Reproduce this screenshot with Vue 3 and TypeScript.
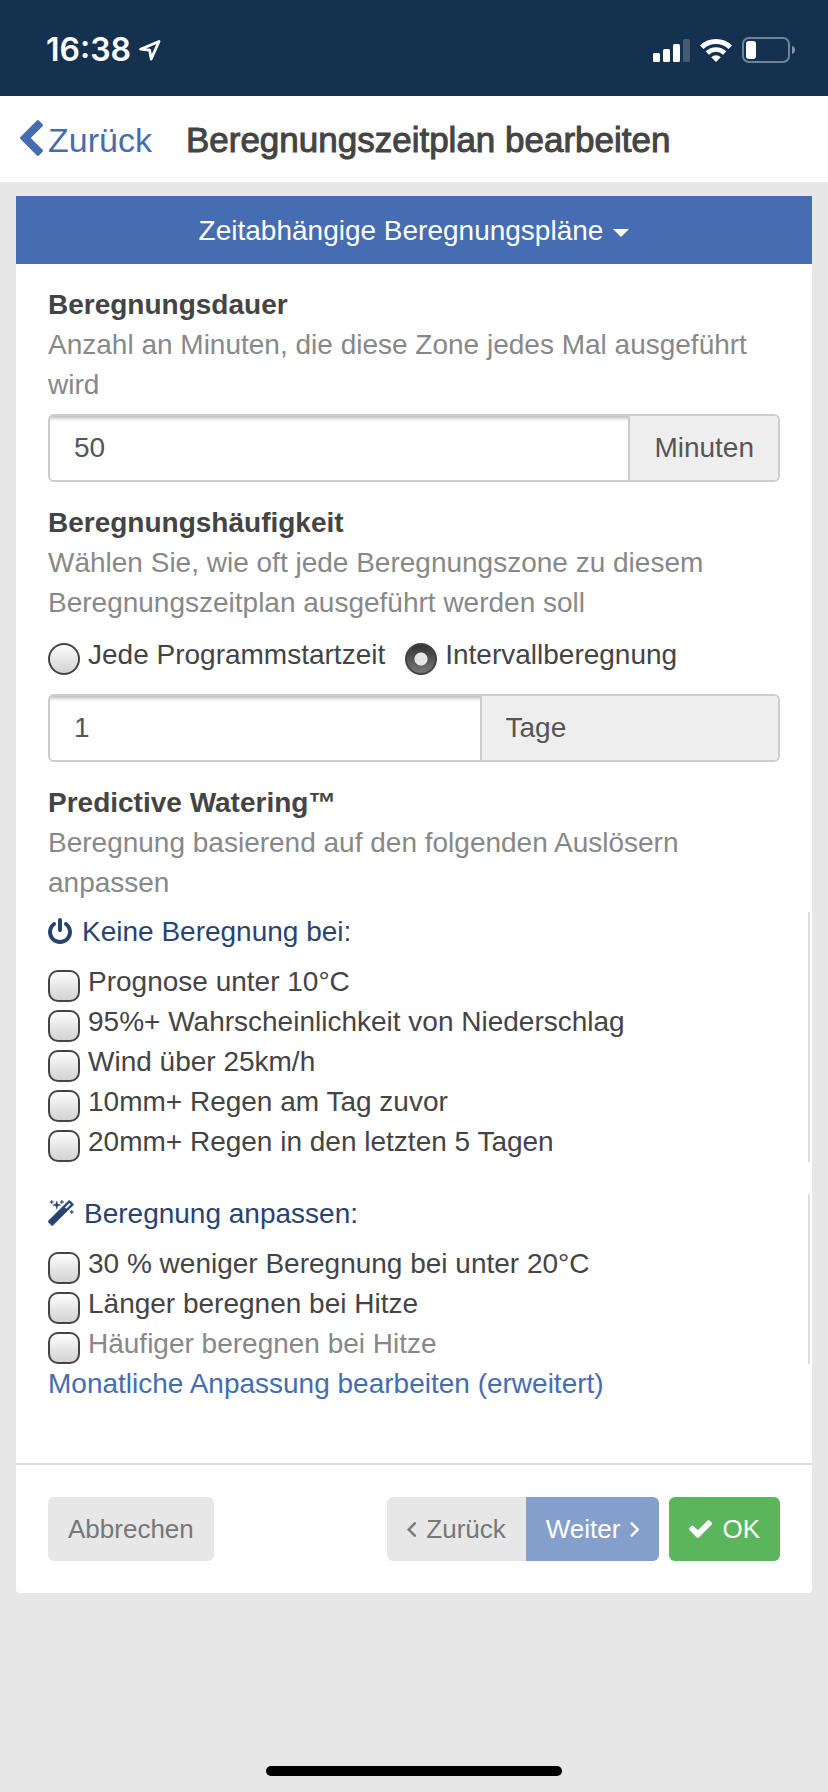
<script setup lang="ts">
import { ref } from 'vue'

interface Trigger {
  id: string
  label: string
  disabled?: boolean
}

const duration = ref('50')
const interval = ref('1')
const unit = ref('days')
const frequency = ref('interval')
const selected = ref<string[]>([])

const skipTriggers: Trigger[] = [
  { id: 'cold', label: 'Prognose unter 10°C' },
  { id: 'rain-chance', label: '95%+ Wahrscheinlichkeit von Niederschlag' },
  { id: 'wind', label: 'Wind über 25km/h' },
  { id: 'rain-day', label: '10mm+ Regen am Tag zuvor' },
  { id: 'rain-week', label: '20mm+ Regen in den letzten 5 Tagen' },
]

const adjustTriggers: Trigger[] = [
  { id: 'less', label: '30 % weniger Beregnung bei unter 20°C' },
  { id: 'longer', label: 'Länger beregnen bei Hitze' },
  { id: 'more-often', label: 'Häufiger beregnen bei Hitze', disabled: true },
]
</script>

<template>
  <div class="screen">
    <div class="status">
      <div class="status-group">
        <span class="clock">16:38</span>
        <svg class="location" viewBox="0 0 22 21" width="22" height="21" aria-hidden="true">
          <path d="M20 1.5 1.6 9.2l9 .9 1.6 8.9z" fill="none" stroke="#fff" stroke-width="2.8" stroke-linejoin="round" />
        </svg>
      </div>
      <div class="status-group status-right">
        <svg viewBox="0 0 37 23" width="37" height="23" aria-hidden="true">
          <g fill="#fff">
            <rect x="0" y="14" width="7" height="9" rx="1.5" />
            <rect x="10" y="10" width="7" height="13" rx="1.5" />
            <rect x="20" y="5" width="7" height="18" rx="1.5" />
            <rect x="30" y="0" width="7" height="23" rx="1.5" opacity=".2" />
          </g>
        </svg>
        <svg viewBox="0 0 32 24" width="32" height="24" aria-hidden="true">
          <g fill="none" stroke="#fff" stroke-width="5">
            <path d="M1.8 9.2a20.4 20.4 0 0 1 28.4 0" />
            <path d="M7.3 15a12.4 12.4 0 0 1 17.4 0" stroke-width="4.6" />
          </g>
          <path d="M16 24l-4.8-4.8a7 7 0 0 1 9.6 0z" fill="#fff" />
        </svg>
        <svg viewBox="0 0 54 26" width="54" height="26" aria-hidden="true">
          <rect x="1" y="1" width="46" height="24" rx="6" fill="none" stroke="#6d8499" stroke-width="2" />
          <rect x="4" y="4" width="10" height="18" rx="3" fill="#fff" />
          <path d="M50 9c4 1 4 7 0 8z" fill="#8496a7" />
        </svg>
      </div>
    </div>

    <header class="header">
      <a class="back" href="#">
        <svg viewBox="410 26 1036 1612" width="23" height="36" aria-hidden="true">
          <path fill="currentColor" d="M1427 301l-531 531 531 531q19 19 19 45t-19 45l-166 166q-19 19-45 19t-45-19l-742-742q-19-19-19-45t19-45l742-742q19-19 45-19t45 19l166 166q19 19 19 45t-19 45z" />
        </svg>
        <span>Zurück</span>
      </a>
      <h1 class="title">Beregnungszeitplan bearbeiten</h1>
    </header>

    <main class="panel">
      <button class="plan-menu" type="button" aria-haspopup="true">
        <span>Zeitabhängige Beregnungspläne</span>
        <span class="caret"></span>
      </button>

      <div class="body">
        <section class="section">
          <label class="label" for="duration">Beregnungsdauer</label>
          <p class="hint">Anzahl an Minuten, die diese Zone jedes Mal ausgeführt wird</p>
          <div class="input-group">
            <input id="duration" v-model="duration" class="field" type="text" inputmode="numeric" />
            <span class="addon">Minuten</span>
          </div>
        </section>

        <section class="section">
          <label class="label" for="interval">Beregnungshäufigkeit</label>
          <p class="hint">Wählen Sie, wie oft jede Beregnungszone zu diesem Beregnungszeitplan ausgeführt werden soll</p>
          <div class="radios">
            <label class="choice">
              <input v-model="frequency" class="box radio" type="radio" name="frequency" value="start" />
              <span>Jede Programmstartzeit</span>
            </label>
            <label class="choice">
              <input v-model="frequency" class="box radio" type="radio" name="frequency" value="interval" />
              <span>Intervallberegnung</span>
            </label>
          </div>
          <div class="input-group split">
            <input id="interval" v-model="interval" class="field" type="text" inputmode="numeric" />
            <select v-model="unit" class="addon unit" aria-label="Einheit">
              <option value="days">Tage</option>
            </select>
          </div>
        </section>

        <section>
          <h2 class="label">Predictive Watering™</h2>
          <p class="hint">Beregnung basierend auf den folgenden Auslösern anpassen</p>
          <div class="triggers" role="group" aria-labelledby="skip-title">
            <h3 id="skip-title" class="triggers-title">
              <svg viewBox="128 0 1536 1664" width="24" height="26" aria-hidden="true">
                <path fill="currentColor" d="M1664 896q0 156-61 298t-164 245-245 164-298 61-298-61-245-164-164-245-61-298q0-182 80.500-343t226.500-270q43-32 95.500-25t83.500 50q32 42 24.500 94.500t-49.500 84.500q-98 74-151.500 181t-53.500 228q0 104 40.500 198.500t109.500 163.500 163.500 109.500 198.500 40.500 198.500-40.500 163.500-109.500 109.500-163.500 40.500-198.500q0-121-53.500-228t-151.500-181q-42-32-49.500-84.500t24.500-94.500q31-43 84-50t95 25q146 109 226.500 270t80.500 343zm-640-768v640q0 52-38 90t-90 38-90-38-38-90v-640q0-52 38-90t90-38 90 38 38 90z" />
              </svg>
              <span>Keine Beregnung bei:</span>
            </h3>
            <label v-for="t in skipTriggers" :key="t.id" class="choice">
              <input v-model="selected" class="box" type="checkbox" :value="t.id" />
              <span>{{ t.label }}</span>
            </label>
          </div>
          <div class="triggers" role="group" aria-labelledby="adjust-title">
            <h3 id="adjust-title" class="triggers-title">
              <svg viewBox="80 0 1660 1660" width="26" height="26" aria-hidden="true">
                <path fill="currentColor" stroke="currentColor" stroke-width="30" d="M1254 581l293-293-107-107-293 293zm447-293q0 27-18 45l-1286 1286q-18 18-45 18t-45-18l-198-198q-18-18-18-45t18-45l1286-1286q18-18 45-18t45 18l198 198q18 18 18 45zm-1351-190l98 30-98 30-30 98-30-98-98-30 98-30 30-98zm350 162l196 60-196 60-60 196-60-196-196-60 196-60 60-196zm930 478l98 30-98 30-30 98-30-98-98-30 98-30 30-98zm-640-640l98 30-98 30-30 98-30-98-98-30 98-30 30-98z" />
              </svg>
              <span>Beregnung anpassen:</span>
            </h3>
            <label v-for="t in adjustTriggers" :key="t.id" class="choice" :class="{ off: t.disabled }">
              <input v-model="selected" class="box" type="checkbox" :value="t.id" :disabled="t.disabled" />
              <span>{{ t.label }}</span>
            </label>
          </div>
          <a class="monthly" href="#">Monatliche Anpassung bearbeiten (erweitert)</a>
        </section>
      </div>

      <div class="actions">
        <button class="btn" type="button">Abbrechen</button>
        <div class="actions-right">
          <div class="btn-group">
            <button class="btn" type="button">
              <svg viewBox="591 478 612 964" width="9" height="15" aria-hidden="true">
                <path fill="currentColor" stroke="currentColor" stroke-width="40" d="M1203 544q0 13-10 23l-393 393 393 393q10 10 10 23t-10 23l-50 50q-10 10-23 10t-23-10l-466-466q-10-10-10-23t10-23l466-466q10-10 23-10t23 10l50 50q10 10 10 23z" />
              </svg>
              Zurück
            </button>
            <button class="btn next" type="button">
              Weiter
              <svg viewBox="559 478 612 964" width="9" height="15" aria-hidden="true">
                <path fill="currentColor" stroke="currentColor" stroke-width="40" d="M1171 960q0 13-10 23l-466 466q-10 10-23 10t-23-10l-50-50q-10-10-10-23t10-23l393-393-393-393q-10-10-10-23t10-23l50-50q10-10 23-10t23 10l466 466q10 10 10 23z" />
              </svg>
            </button>
          </div>
          <button class="btn ok" type="button">
            <svg viewBox="121 334 1550 1188" width="23" height="18" aria-hidden="true">
              <path fill="currentColor" d="M1671 566q0 40-28 68l-724 724-136 136q-28 28-68 28t-68-28l-136-136-362-362q-28-28-28-68t28-68l136-136q28-28 68-28t68 28l294 295 656-657q28-28 68-28t68 28l136 136q28 28 28 68z" />
            </svg>
            OK
          </button>
        </div>
      </div>
    </main>

    <div class="home-indicator"></div>
  </div>
</template>

<style>
body {
  margin: 0;
  background: #e7e7e7;
}
</style>

<style scoped>
.screen {
  box-sizing: border-box;
  display: flex;
  flex-direction: column;
  min-height: 100vh;
  padding-bottom: 16px;
  background: #e7e7e7;
  color: #444;
  font-family: "Liberation Sans", Arial, sans-serif;
  font-size: 28px;
  line-height: 40px;
}

.screen svg {
  display: block;
  flex: none;
}

.status {
  box-sizing: border-box;
  display: flex;
  align-items: center;
  justify-content: space-between;
  height: 96px;
  padding: 4px 32px 0 46px;
  background: #143250;
  color: #fff;
}

.status-group {
  display: flex;
  align-items: center;
  gap: 8px;
}

.status-right {
  gap: 10px;
}

.clock {
  font-family: Inter, sans-serif;
  font-size: 32px;
  font-weight: 600;
}

.header {
  display: flex;
  align-items: center;
  gap: 34px;
  padding: 22px 20px 20px;
  background: #fff;
  font-size: 34px;
  line-height: 44px;
}

.back {
  display: flex;
  align-items: center;
  gap: 5px;
  color: #466cb1;
  text-decoration: none;
}

.back svg {
  margin-bottom: 4px;
}

.title {
  margin: 0;
  font-size: 35px;
  font-weight: 400;
  -webkit-text-stroke: 1px #444;
}

.panel {
  margin: 14px 16px 0;
  border-radius: 0 0 4px 4px;
  background: #fff;
}

.plan-menu {
  display: flex;
  align-items: center;
  justify-content: center;
  gap: 10px;
  width: 100%;
  padding: 15px 20px 13px;
  border: 0;
  background: #466cb1;
  color: #fff;
  font: inherit;
}

.caret {
  margin-top: 4px;
  border-top: 8px solid #fff;
  border-right: 8px solid transparent;
  border-left: 8px solid transparent;
}

.body {
  padding: 21px 32px 59px;
}

.section {
  margin-bottom: 21px;
}

.label {
  display: block;
  margin: 0;
  font-size: 28px;
  font-weight: 700;
}

.hint {
  margin: 0 0 9px;
  color: #888;
}

.input-group {
  box-sizing: border-box;
  display: flex;
  height: 68px;
  border: 2px solid #ccc;
  border-radius: 6px;
  overflow: hidden;
}

.field {
  flex: 1 1 0;
  min-width: 0;
  padding: 0 24px;
  border: 0;
  background: #fff;
  box-shadow: inset 0 6px 4px -4px rgba(0, 0, 0, 0.3);
  color: #555;
  font: inherit;
}

.addon {
  box-sizing: border-box;
  padding: 12px 24px;
  border: 0;
  border-left: 2px solid #ccc;
  background: #eee;
  color: #555;
  font: inherit;
}

.split {
  display: grid;
  grid-template-columns: 59fr 41fr;
}

.unit {
  min-width: 0;
  border-radius: 0;
  appearance: none;
}

.radios {
  display: flex;
  flex-wrap: wrap;
  gap: 0 20px;
  margin: 12px 0 19px;
}

.choice {
  display: flex;
  align-items: flex-end;
  gap: 8px;
}

.off {
  color: #888;
}

.box {
  box-sizing: border-box;
  flex: none;
  width: 32px;
  height: 32px;
  margin: 0;
  border: 2px solid #444;
  border-radius: 10px;
  background: linear-gradient(#fdfdfd, #d2d2d2);
  appearance: none;
}

.radio {
  border-radius: 50%;
}

.radio:checked {
  background:
    radial-gradient(circle, #e6e6e6 6px, transparent 7px),
    linear-gradient(#333, #777);
}

.triggers {
  margin: 0 -30px 32px 0;
  border-right: 2px solid #ddd;
}

.triggers:last-of-type {
  margin-bottom: 0;
}

.triggers-title {
  display: flex;
  align-items: center;
  gap: 10px;
  margin: 0 0 10px;
  color: #284370;
  font-size: 28px;
  font-weight: 400;
}

.triggers-title svg {
  margin-bottom: 2px;
}

.monthly {
  display: block;
  color: #466cb1;
  text-decoration: none;
}

.actions {
  display: flex;
  align-items: center;
  justify-content: space-between;
  padding: 32px;
  border-top: 2px solid #ddd;
}

.actions-right {
  display: flex;
  gap: 10px;
}

.btn-group {
  display: flex;
  border-radius: 6px;
  overflow: hidden;
}

.btn {
  display: flex;
  align-items: center;
  gap: 10px;
  padding: 12px 20px;
  border: 0;
  border-radius: 6px;
  background: #e7e7e7;
  color: #777;
  font: inherit;
  font-size: 26px;
}

.btn-group .btn {
  border-radius: 0;
}

.btn.next {
  background: #849fcc;
  color: #fff;
}

.btn.ok {
  background: #5ab55c;
  color: #fff;
}

.home-indicator {
  align-self: center;
  width: 296px;
  height: 10px;
  margin-top: auto;
  border-radius: 5px;
  background: #000;
}
</style>
